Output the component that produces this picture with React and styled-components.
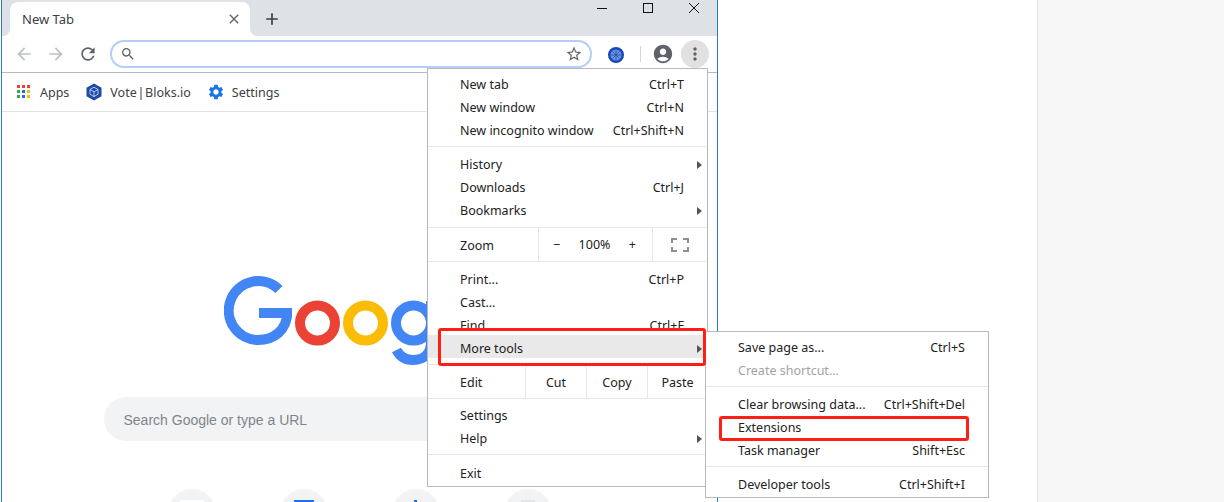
import React from "react";
import styled, { createGlobalStyle } from "styled-components";
import {
  MdAccountCircle,
  MdAdd,
  MdArrowBack,
  MdArrowForward,
  MdClose,
  MdMoreVert,
  MdRefresh,
  MdSearch,
  MdSettings,
  MdStarBorder,
} from "react-icons/md";

const GlobalStyle = createGlobalStyle`
  html, body {
    margin: 0;
    padding: 0;
    background: #fff;
  }
  * {
    box-sizing: border-box;
  }
`;

const Page = styled.div`
  position: relative;
  width: 1224px;
  height: 502px;
  display: flex;
  overflow: hidden;
  background: #fff;
  font-family: "Noto Sans", sans-serif;
  color: #222;
`;

const Browser = styled.div`
  width: 717px;
  margin-left: 1px;
  border-left: 1px solid #2b7cc4;
  border-right: 1px solid #2b7cc4;
  display: flex;
  flex-direction: column;
`;

const SidePanel = styled.div`
  width: 187px;
  margin-left: auto;
  background: #f7f7f7;
  border-left: 1px solid #e6e6e6;
`;

const TabStrip = styled.div`
  height: 36px;
  flex: none;
  display: flex;
  align-items: flex-end;
  padding-left: 8px;
  background: #dee1e6;
`;

const Tab = styled.div`
  position: relative;
  width: 240px;
  height: 34px;
  display: flex;
  align-items: center;
  justify-content: space-between;
  padding: 0 8px 0 12px;
  border-radius: 8px 8px 0 0;
  background: #fff;
  font-size: 13px;
  color: #3c4043;

  &::before,
  &::after {
    content: "";
    position: absolute;
    bottom: 0;
    width: 8px;
    height: 8px;
  }
  &::before {
    left: -8px;
    background: radial-gradient(circle at 0 0, #dee1e6 8px, #fff 8.5px);
  }
  &::after {
    right: -8px;
    background: radial-gradient(circle at 100% 0, #dee1e6 8px, #fff 8.5px);
  }
`;

const NewTab = styled.div`
  width: 20px;
  height: 20px;
  margin: 0 0 7px 12px;
  display: flex;
  font-size: 20px;
  color: #3c4043;
`;

const WindowControls = styled.div`
  margin-left: auto;
  align-self: flex-start;
  display: flex;
  gap: 36px;
  padding: 3px 18px 0 0;
`;

const Toolbar = styled.div`
  height: 37px;
  flex: none;
  display: flex;
  align-items: center;
  padding: 0 8px 1px 6px;
  background: #fff;
  border-bottom: 1px solid #b8b8b8;
`;

const NavButton = styled.div`
  width: 32px;
  height: 20px;
  display: flex;
  justify-content: center;
  font-size: 20px;
  color: ${(p) => (p.$off ? "#bdc1c6" : "#5f6368")};
`;

const Omnibox = styled.div`
  width: 482px;
  height: 28px;
  margin-left: 6px;
  display: flex;
  align-items: center;
  justify-content: space-between;
  padding: 0 7px 0 8px;
  border: 2px solid #b3cefb;
  border-radius: 14px;
  color: #5f6368;
`;

const ExtensionBadge = styled.div`
  width: 16px;
  height: 16px;
  margin-left: 16px;
  flex: none;
`;

const ToolbarDivider = styled.div`
  width: 1px;
  height: 16px;
  margin: 0 11px 0 16px;
  background: #d4d4d4;
`;

const Avatar = styled.div`
  width: 22px;
  height: 22px;
  display: flex;
  font-size: 22px;
  color: #5f6368;
`;

const MenuButton = styled.div`
  width: 28px;
  height: 28px;
  margin-left: 7px;
  display: flex;
  align-items: center;
  justify-content: center;
  border-radius: 50%;
  background: #e1e1e1;
  font-size: 20px;
  color: #5f6368;
`;

const BookmarkBar = styled.div`
  height: 39px;
  flex: none;
  display: flex;
  align-items: center;
  gap: 16px;
  padding-left: 15px;
  background: #fff;
  border-bottom: 1px solid #e2e2e2;
  font-size: 12.5px;
  word-spacing: -2.5px;
  color: #3c4043;
`;

const Bookmark = styled.div`
  display: flex;
  align-items: center;
  gap: ${(p) => p.$gap}px;
  margin-right: ${(p) => p.$after || 0}px;
`;

const AppsGrid = styled.div`
  width: 14px;
  height: 14px;
  display: grid;
  grid-template-columns: repeat(3, 3px);
  grid-template-rows: repeat(3, 3px);
  gap: 2px;
`;

const AppsDot = styled.span`
  background: ${(p) => p.$color};
`;

const GearIcon = styled(MdSettings)`
  font-size: 18px;
  color: #1a73e8;
`;

const NewTabPage = styled.div`
  flex: 1;
  display: flex;
  flex-direction: column;
  align-items: center;
  padding-top: 164px;
  overflow: hidden;
`;

const SearchField = styled.div`
  width: 512px;
  height: 44px;
  margin-top: 31px;
  flex: none;
  display: flex;
  align-items: center;
  padding: 1px 0 0 20px;
  border-radius: 22px;
  background: #f1f3f4;
  font-family: "Liberation Sans", Arial, sans-serif;
  font-size: 14px;
  color: #80868b;
`;

const Shortcuts = styled.div`
  margin-top: 48px;
  flex: none;
  display: flex;
  gap: 64px;
`;

const ShortcutTile = styled.div`
  width: 48px;
  height: 48px;
  display: flex;
  justify-content: center;
  padding-top: 11px;
  border-radius: 50%;
  background: #f1f3f4;
`;

const ShortcutGlyph = styled.span`
  width: ${(p) => p.$width}px;
  height: 2px;
  background: ${(p) => p.$color};
`;

const Menu = styled.div`
  position: absolute;
  left: ${(p) => p.$left}px;
  top: ${(p) => p.$top}px;
  width: ${(p) => p.$width}px;
  background: #fff;
  border: 1px solid #b9b9b9;
  font-size: 12.5px;
  color: #222;
`;

const MenuSection = styled.div`
  padding: ${(p) => p.$top}px 0 ${(p) => p.$bottom}px;
  & + & {
    border-top: 1px solid #e6e6e6;
  }
`;

const MenuItem = styled.div`
  height: 23px;
  display: flex;
  align-items: center;
  justify-content: space-between;
  padding: 2px 23px 0 32px;
  white-space: nowrap;
  background: ${(p) => (p.$active ? "#e9e9e9" : "transparent")};
  color: ${(p) => (p.$disabled ? "#a3a3a3" : "inherit")};
  ${(p) => p.$active && "margin: -1px 0 1px; padding-top: 4px;"}
`;

const SubArrow = styled.span`
  margin-right: -18px;
  border-left: 5px solid #555;
  border-top: 4px solid transparent;
  border-bottom: 4px solid transparent;
`;

const ControlRow = styled.div`
  height: 35px;
  display: grid;
  grid-template-columns: ${(p) => p.$columns};
  border-top: 1px solid #e6e6e6;
  border-bottom: 1px solid #e6e6e6;
`;

const ControlCell = styled.div`
  display: flex;
  align-items: center;
  justify-content: ${(p) => (p.$label ? "flex-start" : "center")};
  padding-left: ${(p) => (p.$label ? "32px" : "0")};
  padding-top: 1px;
  border-left: ${(p) => (p.$label ? "none" : "1px solid #e6e6e6")};
`;

const ZoomControls = styled(ControlCell)`
  justify-content: space-between;
  padding: 0 16px 0 14px;
`;

const Callout = styled.div`
  position: absolute;
  left: ${(p) => p.$left}px;
  top: ${(p) => p.$top}px;
  width: ${(p) => p.$width}px;
  height: ${(p) => p.$height}px;
  border: 3px solid #ff1f14;
  border-radius: 3px;
`;

const appColors = [
  "#ea4335", "#ea4335", "#ea4335",
  "#34a853", "#1a73e8", "#fbbc05",
  "#34a853", "#1a73e8", "#fbbc05",
];

function GoogleLogo() {
  return (
    <svg width="272" height="90" viewBox="0 0 272 90" fill="none" style={{ flex: "none" }}>
      <path d="M55 13.5A29.5 29.5 0 1 0 34 64C50 64 63 54 63 37" stroke="#4285f4" strokeWidth="10" />
      <rect x="35" y="32" width="33" height="10" fill="#4285f4" />
      <circle cx="93.5" cy="47" r="17.5" stroke="#ea4335" strokeWidth="10" />
      <circle cx="141.5" cy="47" r="17.5" stroke="#fbbc05" strokeWidth="10" />
      <circle cx="189.5" cy="47" r="17.5" stroke="#4285f4" strokeWidth="10" />
      <path d="M172.5 74C176 81 182 84 189 84C201 84 207 77 207 66V25" stroke="#4285f4" strokeWidth="10" />
    </svg>
  );
}

function BloksIcon() {
  return (
    <svg width="16" height="18" viewBox="0 0 16 18">
      <path d="M8 0.5 15.5 4.8V13.2L8 17.5 0.5 13.2V4.8Z" fill="#1c4aa6" />
      <path d="M8 4.2 12 6.5V11.2L8 13.6 4 11.2V6.5ZM4 6.5 8 8.8 12 6.5M8 8.8V13.6" fill="none" stroke="#c9d6f2" strokeWidth="0.9" />
    </svg>
  );
}

function ExtensionIcon() {
  return (
    <svg width="16" height="16" viewBox="0 0 16 16">
      <circle cx="8" cy="8" r="8" fill="#1746b8" />
      <circle cx="8" cy="8" r="5.5" fill="#6f93dc" />
      <path d="M3 8H13M8 3V13M4.5 4.5 11.5 11.5M11.5 4.5 4.5 11.5" stroke="#1f50bd" strokeWidth="0.8" />
    </svg>
  );
}

function MinimizeIcon() {
  return (
    <svg width="10" height="10" viewBox="0 0 10 10">
      <path d="M0 5.5H10" stroke="#111" />
    </svg>
  );
}

function MaximizeIcon() {
  return (
    <svg width="10" height="10" viewBox="0 0 10 10">
      <rect x="0.5" y="0.5" width="9" height="9" fill="none" stroke="#111" />
    </svg>
  );
}

function CloseIcon() {
  return (
    <svg width="10" height="10" viewBox="0 0 10 10">
      <path d="M0 0 10 10M10 0 0 10" stroke="#111" />
    </svg>
  );
}

function FullscreenIcon() {
  return (
    <svg width="18" height="14" viewBox="0 0 18 14" fill="none" stroke="#8f8f8f" strokeWidth="2">
      <path d="M1 5V1H6M12 1H17V5M17 9V13H12M6 13H1V9" />
    </svg>
  );
}

function Item({ label, shortcut, arrow, ...rest }) {
  return (
    <MenuItem {...rest}>
      <span>{label}</span>
      {shortcut && <span>{shortcut}</span>}
      {arrow && <SubArrow />}
    </MenuItem>
  );
}

export default function App() {
  return (
    <Page>
      <GlobalStyle />
      <Browser>
        <TabStrip>
          <Tab>
            New Tab
            <MdClose size={16} color="#5f6368" />
          </Tab>
          <NewTab>
            <MdAdd />
          </NewTab>
          <WindowControls>
            <MinimizeIcon />
            <MaximizeIcon />
            <CloseIcon />
          </WindowControls>
        </TabStrip>
        <Toolbar>
          <NavButton $off>
            <MdArrowBack />
          </NavButton>
          <NavButton $off>
            <MdArrowForward />
          </NavButton>
          <NavButton>
            <MdRefresh />
          </NavButton>
          <Omnibox>
            <MdSearch size={16} />
            <MdStarBorder size={18} />
          </Omnibox>
          <ExtensionBadge>
            <ExtensionIcon />
          </ExtensionBadge>
          <ToolbarDivider />
          <Avatar>
            <MdAccountCircle />
          </Avatar>
          <MenuButton>
            <MdMoreVert />
          </MenuButton>
        </Toolbar>
        <BookmarkBar>
          <Bookmark $gap={9} $after={1}>
            <AppsGrid>
              {appColors.map((color, i) => (
                <AppsDot key={i} $color={color} />
              ))}
            </AppsGrid>
            Apps
          </Bookmark>
          <Bookmark $gap={8}>
            <BloksIcon />
            Vote | Bloks.io
          </Bookmark>
          <Bookmark $gap={7}>
            <GearIcon />
            Settings
          </Bookmark>
        </BookmarkBar>
        <NewTabPage>
          <GoogleLogo />
          <SearchField>Search Google or type a URL</SearchField>
          <Shortcuts>
            <ShortcutTile>
              <ShortcutGlyph $width={24} $color="#fff" />
            </ShortcutTile>
            <ShortcutTile>
              <ShortcutGlyph $width={20} $color="#1a73e8" />
            </ShortcutTile>
            <ShortcutTile>
              <ShortcutGlyph $width={3} $color="#1a73e8" />
            </ShortcutTile>
            <ShortcutTile>
              <ShortcutGlyph $width={14} $color="#e6e7e8" />
            </ShortcutTile>
          </Shortcuts>
        </NewTabPage>
      </Browser>
      <SidePanel />

      <Menu $left={427} $top={68} $width={281}>
        <MenuSection $top={3} $bottom={5}>
          <Item label="New tab" shortcut="Ctrl+T" />
          <Item label="New window" shortcut="Ctrl+N" />
          <Item label="New incognito window" shortcut="Ctrl+Shift+N" />
        </MenuSection>
        <MenuSection $top={5} $bottom={6}>
          <Item label="History" arrow />
          <Item label="Downloads" shortcut="Ctrl+J" />
          <Item label="Bookmarks" arrow />
        </MenuSection>
        <ControlRow $columns="110px 114px 1fr">
          <ControlCell $label>Zoom</ControlCell>
          <ZoomControls>
            <span>−</span>
            <span>100%</span>
            <span>+</span>
          </ZoomControls>
          <ControlCell>
            <FullscreenIcon />
          </ControlCell>
        </ControlRow>
        <MenuSection $top={5} $bottom={5}>
          <Item label="Print..." shortcut="Ctrl+P" />
          <Item label="Cast..." />
          <Item label="Find..." shortcut="Ctrl+F" />
          <Item label="More tools" arrow $active />
        </MenuSection>
        <ControlRow $columns="97px 61px 61px 1fr">
          <ControlCell $label>Edit</ControlCell>
          <ControlCell>Cut</ControlCell>
          <ControlCell>Copy</ControlCell>
          <ControlCell>Paste</ControlCell>
        </ControlRow>
        <MenuSection $top={4} $bottom={5}>
          <Item label="Settings" />
          <Item label="Help" arrow />
        </MenuSection>
        <MenuSection $top={6} $bottom={2}>
          <Item label="Exit" />
        </MenuSection>
      </Menu>

      <Menu $left={705} $top={331} $width={284}>
        <MenuSection $top={3} $bottom={5}>
          <Item label="Save page as..." shortcut="Ctrl+S" />
          <Item label="Create shortcut..." $disabled />
        </MenuSection>
        <MenuSection $top={5} $bottom={5}>
          <Item label="Clear browsing data..." shortcut="Ctrl+Shift+Del" />
          <Item label="Extensions" />
          <Item label="Task manager" shortcut="Shift+Esc" />
        </MenuSection>
        <MenuSection $top={5} $bottom={2}>
          <Item label="Developer tools" shortcut="Ctrl+Shift+I" />
        </MenuSection>
      </Menu>

      <Callout $left={438} $top={328} $width={268} $height={38} />
      <Callout $left={719} $top={416} $width={250} $height={25} />
    </Page>
  );
}
